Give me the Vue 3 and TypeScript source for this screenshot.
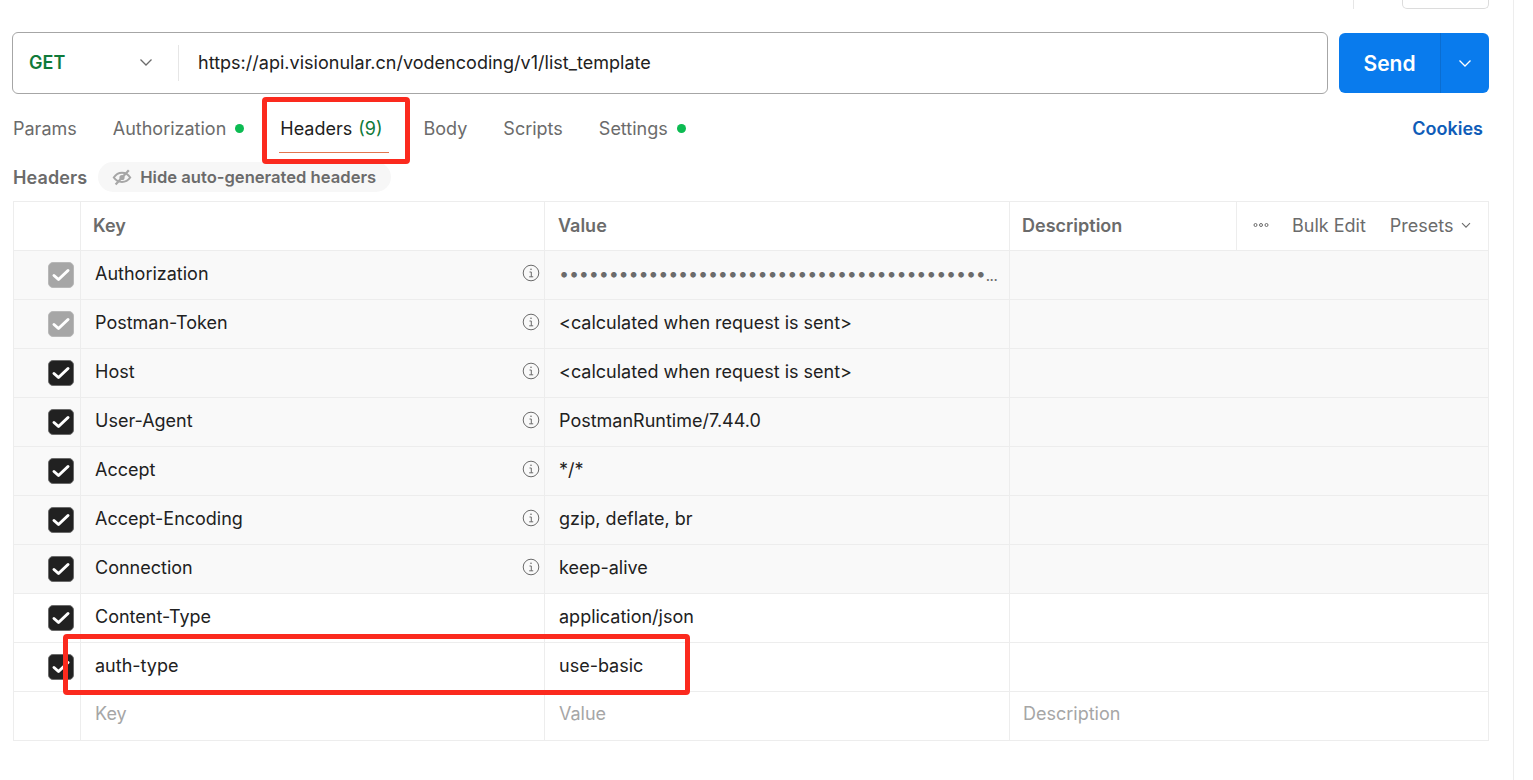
<script setup lang="ts">
interface Row {
  key: string
  value: string
  info: boolean
  muted?: boolean
  auto: boolean
  secret?: boolean
}

const rows: Row[] = [
  { key: 'Authorization', value: '•'.repeat(43), info: true, muted: true, auto: true, secret: true },
  { key: 'Postman-Token', value: '<calculated when request is sent>', info: true, muted: true, auto: true },
  { key: 'Host', value: '<calculated when request is sent>', info: true, auto: true },
  { key: 'User-Agent', value: 'PostmanRuntime/7.44.0', info: true, auto: true },
  { key: 'Accept', value: '*/*', info: true, auto: true },
  { key: 'Accept-Encoding', value: 'gzip, deflate, br', info: true, auto: true },
  { key: 'Connection', value: 'keep-alive', info: true, auto: true },
  { key: 'Content-Type', value: 'application/json', info: false, auto: false },
  { key: 'auth-type', value: 'use-basic', info: false, auto: false },
]
const tabs = [
  { name: 'Params' },
  { name: 'Authorization', dot: true },
  { name: 'Headers', count: '(9)', active: true },
  { name: 'Body' },
  { name: 'Scripts' },
  { name: 'Settings', dot: true },
]
</script>

<template>
  <div class="page">
    <div class="top-strip">
      <span class="strip-divider"></span>
      <span class="strip-box"></span>
    </div>

    <div class="request-line">
      <div class="url-box">
        <div class="method">
          <span>GET</span>
          <svg width="16" height="16" viewBox="0 0 16 16" fill="none"><path d="M2.500 5.500 8 11l5.500-5.500" stroke="#6b6b6b" stroke-width="1.300"/></svg>
        </div>
        <div class="url">https://api.visionular.cn/vodencoding/v1/list_template</div>
      </div>
      <div class="send">
        <span class="send-label">Send</span>
        <span class="send-arrow">
          <svg width="16" height="16" viewBox="0 0 16 16" fill="none"><path d="M2.500 5.500 8 11l5.500-5.500" stroke="#fff" stroke-width="1.300"/></svg>
        </span>
      </div>
    </div>

    <div class="tabs">
      <div v-for="t in tabs" :key="t.name" class="tab" :class="{ active: t.active }">
        <span>{{ t.name }}</span>
        <span v-if="t.count" class="count">{{ t.count }}</span>
        <span v-if="t.dot" class="dot"></span>
      </div>
      <span class="cookies">Cookies</span>
    </div>

    <div class="sub">
      <span class="sub-title">Headers</span>
      <span class="hide-pill">
        <svg width="20" height="20" viewBox="0 0 20 20" fill="none" stroke="#a6a6a6" stroke-width="2">
          <path d="M1.800 10.500C4 7.200 7 5.800 10 5.800s6 1.400 8.200 4.700c-2.200 3.100-5.200 4.500-8.200 4.500s-6-1.400-8.200-4.500Z"/>
          <circle cx="10" cy="10.500" r="2.600" fill="#a6a6a6" stroke="none"/>
          <path d="M16.800 3.200 3.600 17.400" stroke-width="2.200"/>
        </svg>
        Hide auto-generated headers
      </span>
    </div>

    <div class="table">
      <div class="row head">
        <div class="cell check"></div>
        <div class="cell key">Key</div>
        <div class="cell value">Value</div>
        <div class="cell desc">Description</div>
        <div class="cell tools">
          <svg width="16" height="6" viewBox="0 0 16 6" fill="none" stroke="#6b6b6b" stroke-width="1"><circle cx="2.500" cy="3" r="1.500"/><circle cx="8" cy="3" r="1.500"/><circle cx="13.500" cy="3" r="1.500"/></svg>
          <span class="bulk">Bulk Edit</span>
          <span class="presets">Presets</span>
          <svg width="12" height="12" viewBox="0 0 12 12" fill="none"><path d="M2 4.200 6 8.200l4-4" stroke="#6b6b6b" stroke-width="1.100"/></svg>
        </div>
      </div>

      <div v-for="r in rows" :key="r.key" class="row body" :class="{ auto: r.auto }">
        <div class="cell check">
          <span class="box" :class="{ muted: r.muted }">
            <svg width="24" height="24" viewBox="0 0 24 24" fill="none"><path d="M5 12.500 9.500 16.500 19 7.500" stroke="#fff" stroke-width="3" stroke-linecap="round" stroke-linejoin="round"/></svg>
          </span>
        </div>
        <div class="cell key">
          <span class="key-text">{{ r.key }}</span>
          <svg v-if="r.info" class="info" width="18" height="18" viewBox="0 0 18 18" fill="none" stroke="#6b6b6b">
            <circle cx="9" cy="9" r="7.800" stroke-width="1"/>
            <path d="M7.500 8H9.300V12.800M7.200 12.800H11.200" stroke-width="1"/>
            <circle cx="9" cy="5.300" r=".8" fill="#6b6b6b" stroke="none"/>
          </svg>
        </div>
        <div class="cell value">
          <span class="value-text" :class="{ secret: r.secret }">{{ r.value }}</span><span v-if="r.secret" class="more">...</span>
        </div>
        <div class="cell wide"></div>
      </div>

      <div class="row body last">
        <div class="cell check"></div>
        <div class="cell key placeholder">Key</div>
        <div class="cell value placeholder">Value</div>
        <div class="cell wide placeholder">Description</div>
      </div>
    </div>

    <div class="edge"></div>
    <div class="mark mark-tab"></div>
    <div class="mark mark-row"></div>
  </div>
</template>

<style>
html, body { margin: 0; background: #fff; }
</style>

<style scoped>
.page {
  position: relative;
  width: 1533px;
  height: 780px;
  overflow: hidden;
  background: #fff;
  font-family: Inter, "Liberation Sans", sans-serif;
  font-size: 18px;
  color: #212121;
  padding: 0 44px 0 12px;
  box-sizing: border-box;
}
.top-strip {
  height: 9px;
  margin-bottom: 23px;
  display: flex;
  justify-content: flex-end;
}
.strip-divider { width: 1px; height: 9px; background: #e6e6e6; margin-right: 48px; }
.strip-box {
  width: 85px; height: 8px;
  border: 1px solid #dcdcdc; border-top: 0;
  border-radius: 0 0 5px 5px;
}
.request-line { display: flex; gap: 11px; height: 62px; }
.url-box {
  flex: 1;
  display: flex;
  align-items: center;
  border: 1px solid #a6a6a6;
  border-radius: 6px;
}
.method {
  width: 166px;
  height: 36px;
  border-right: 1px solid #e6e6e6;
  box-sizing: border-box;
  display: flex;
  align-items: center;
  justify-content: space-between;
  padding: 0 24px 2px 16px;
  color: #0f7a3a;
  font-weight: 600;
}
.url { padding: 0 0 2px 19px; color: #212121; letter-spacing: 0.02px; }
.send {
  width: 150px; height: 60px; margin-top: 1px;
  display: flex;
  background: #097bed;
  border-radius: 6px;
  color: #fff;
  font-weight: 600;
  font-size: 21px;
}
.send-label { flex: 1; display: flex; align-items: center; justify-content: center; }
.send-arrow {
  width: 48px;
  display: flex; align-items: center; justify-content: center;
  border-left: 1px solid #0a6dd1;
}
.tabs {
  display: flex;
  align-items: center;
  height: 59px;
  gap: 36px;
  padding: 0 6px 0 1px;
  color: #6b6b6b;
}
.tab {
  position: relative;
  display: flex;
  align-items: center;
  gap: 9px;
  height: 100%;
  padding-top: 9px;
  box-sizing: border-box;
}
.tab.active { color: #212121; gap: 6px; margin: 0 5px 0 0; }
.tab.active::after {
  content: "";
  position: absolute;
  left: -1px; right: -6px; bottom: 0;
  height: 1px;
  background: #e2764f;
}
.count { color: #0f7a3a; }
.dot { width: 9px; height: 9px; border-radius: 50%; background: #0cbb52; }
.cookies { margin-left: auto; color: #0f5cb8; font-weight: 600; padding-top: 9px; }
.sub { display: flex; align-items: center; height: 49px; gap: 11px; padding-left: 1px; margin-top: -1px; }
.sub-title { font-weight: 600; color: #6b6b6b; padding-top: 1px; letter-spacing: 0.1px; }
.hide-pill {
  display: inline-flex;
  align-items: center;
  gap: 8px;
  height: 30px;
  padding: 0 15px 0 14px;
  border-radius: 15px;
  background: #f7f7f7;
  color: #6b6b6b;
  font-weight: 600;
  font-size: 16.600px;
}
.table {
  margin-left: 1px;
  width: 1476px;
  border: 1px solid #ededed;
  border-bottom: 0;
  box-sizing: border-box;
}
.row {
  display: grid;
  grid-template-columns: 66px 464px 465px 1fr;
  height: 49px;
  box-sizing: border-box;
  border-bottom: 1px solid #ededed;
}
.row.head { grid-template-columns: 66px 464px 465px 227px 1fr; }
.row.body.auto { background: #f9f9f9; }
.cell {
  display: flex;
  align-items: center;
  min-width: 0;
  padding: 0 10px 4px 14px;
  border-left: 1px solid #ededed;
  box-sizing: border-box;
}
.cell.check { border-left: 0; justify-content: flex-end; padding: 0 6px 0 0; }
.head .cell { font-weight: 600; color: #6b6b6b; padding: 0 10px 2px 12px; }
.head .cell.value { padding-left: 13px; }
.head .tools {
  font-weight: 400;
  gap: 0;
  padding-left: 16px;
}
.bulk { margin-left: 23px; }
.presets { margin-left: 24px; margin-right: 6px; }
.box {
  width: 26px; height: 26px;
  box-sizing: border-box;
  border: 1px solid #6b6b6b;
  border-radius: 5px;
  background: #212121;
  display: flex; align-items: center; justify-content: center;
}
.box.muted { background: #a6a6a6; border-color: #b8b8b8; }
.key-text { flex: 1; }
.info { margin-right: -6px; }
.value-text { white-space: nowrap; }
.secret { color: #6b6b6b; letter-spacing: -0.2px; }
.more { color: #6b6b6b; letter-spacing: -0.5px; font-size: 15px; padding-top: 5px; }
.cell.placeholder { color: #a6a6a6; padding-bottom: 5px; }
.cell.wide.placeholder { padding-left: 13px; }
.edge {
  position: absolute;
  left: 1513px; top: 0; bottom: 0;
  width: 1px;
  background: #ededed;
}
.mark {
  position: absolute;
  border: 5px solid #fb2a1e;
  border-radius: 4px;
  box-sizing: border-box;
}
.mark-tab { left: 262px; top: 97px; width: 148px; height: 67px; }
.mark-row { left: 63px; top: 634px; width: 627px; height: 61px; }
</style>
